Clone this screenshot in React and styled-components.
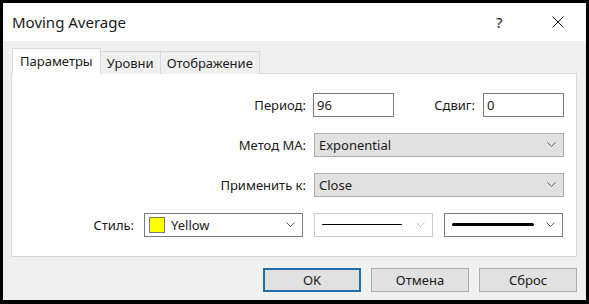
import styled, { createGlobalStyle } from "styled-components";

const Global = createGlobalStyle`
  html, body {
    margin: 0;
    padding: 0;
    background: #000;
  }
  body {
    font-family: "Segoe UI", "Noto Sans", "Open Sans", sans-serif;
    font-size: 13px;
    color: #1a1a1a;
  }
`;

const Screen = styled.div`
  width: 589px;
  height: 304px;
  box-sizing: border-box;
  padding: 3px 3px 4px 3px;
  background: #000;
`;

const Window = styled.div`
  width: 583px;
  height: 297px;
  display: flex;
  flex-direction: column;
  background: #f0f0f0;
`;

const TitleBar = styled.div`
  height: 38px;
  flex-shrink: 0;
  display: flex;
  align-items: center;
  background: #fff;
  padding-left: 9px;
`;

const Title = styled.div`
  flex: 1;
  font-size: 15px;
  color: #1a1a1a;
`;

const Help = styled.div`
  width: 22px;
  font-size: 15px;
  color: #1a1a1a;
  margin-right: 34px;
`;

const Close = styled.div`
  width: 12px;
  height: 12px;
  margin-right: 22px;
  display: flex;
`;

const Body = styled.div`
  flex: 1;
  padding: 7px 9px 0 8px;
  display: flex;
  flex-direction: column;
`;

const TabList = styled.div`
  height: 26px;
  display: flex;
  align-items: flex-end;
  padding-left: 1px;
  position: relative;
  z-index: 1;
`;

const Tab = styled.div`
  box-sizing: border-box;
  height: ${(p) => (p.$active ? "26px" : "23px")};
  padding: 0 ${(p) => (p.$active ? "7px" : "6px")};
  display: flex;
  align-items: center;
  background: ${(p) => (p.$active ? "#fff" : "#f0f0f0")};
  border: 1px solid #d9d9d9;
  border-bottom: none;
  margin-left: ${(p) => (p.$first ? "0" : "-1px")};
  padding-bottom: ${(p) => (p.$active ? "2px" : "0")};
`;

const Panel = styled.div`
  box-sizing: border-box;
  margin-top: -1px;
  width: 566px;
  height: 184px;
  background: #fff;
  border: 1px solid #d9d9d9;
  padding-top: 19px;
  display: flex;
  flex-direction: column;
  gap: 17px;
`;

const Row = styled.div`
  display: flex;
  align-items: center;
  height: 23px;
`;

const Label = styled.div`
  width: ${(p) => p.$w}px;
  text-align: right;
  margin-right: ${(p) => p.$gap}px;
  white-space: nowrap;
`;

const TextInput = styled.div`
  box-sizing: border-box;
  width: ${(p) => p.$w}px;
  height: 24px;
  border: 1px solid #7a7a7a;
  background: #fff;
  padding: 0 3px;
  display: flex;
  align-items: center;
`;

const Select = styled.div`
  box-sizing: border-box;
  width: ${(p) => p.$w}px;
  height: 24px;
  margin-right: ${(p) => p.$mr || 0}px;
  border: 1px solid ${(p) => (p.$flat ? "#adadad" : p.$disabled ? "#cccccc" : "#7a7a7a")};
  background: ${(p) => (p.$flat ? "#e1e1e1" : "#fff")};
  padding: 0 7px 0 4px;
  display: flex;
  align-items: center;
  gap: 6px;
`;

const Value = styled.div`
  flex: 1;
`;

const Swatch = styled.div`
  width: 16px;
  height: 16px;
  box-sizing: border-box;
  background: #ffff00;
  border: 1px solid #7a7a7a;
`;

const Line = styled.div`
  flex: 1;
  height: ${(p) => p.$h}px;
  border-radius: ${(p) => p.$h / 2}px;
  background: #000;
  margin: 0 ${(p) => p.$end}px 0 3px;
`;

const Footer = styled.div`
  display: flex;
  justify-content: flex-end;
  gap: 10px;
  margin-top: 11px;
`;

const Button = styled.div`
  box-sizing: border-box;
  width: 98px;
  height: 24px;
  display: flex;
  align-items: center;
  justify-content: center;
  background: #e1e1e1;
  border: ${(p) => (p.$default ? "2px solid #1f6ea8" : "1px solid #adadad")};
`;

function Chevron({ color = "#606060" }) {
  return (
    <svg width="9" height="5" viewBox="0 0 9 5">
      <path d="M0.5 0.5 L4.5 4.5 L8.5 0.5" fill="none" stroke={color} strokeWidth="1" />
    </svg>
  );
}

export default function App() {
  return (
    <Screen>
      <Global />
      <Window>
        <TitleBar>
          <Title>Moving Average</Title>
          <Help>?</Help>
          <Close>
            <svg width="12" height="12" viewBox="0 0 12 12">
              <path d="M0.5 0.5 L11.5 11.5 M11.5 0.5 L0.5 11.5" stroke="#1a1a1a" strokeWidth="1" />
            </svg>
          </Close>
        </TitleBar>
        <Body>
          <TabList>
            <Tab $active $first>Параметры</Tab>
            <Tab>Уровни</Tab>
            <Tab>Отображение</Tab>
          </TabList>
          <Panel>
            <Row>
              <Label $w={294} $gap={7}>Период:</Label>
              <TextInput $w={81}>96</TextInput>
              <Label $w={81} $gap={8}>Сдвиг:</Label>
              <TextInput $w={81}>0</TextInput>
            </Row>
            <Row>
              <Label $w={294} $gap={8}>Метод МА:</Label>
              <Select $w={250} $flat>
                <Value>Exponential</Value>
                <Chevron />
              </Select>
            </Row>
            <Row>
              <Label $w={294} $gap={8}>Применить к:</Label>
              <Select $w={250} $flat>
                <Value>Close</Value>
                <Chevron />
              </Select>
            </Row>
            <Row>
              <Label $w={122} $gap={10}>Стиль:</Label>
              <Select $w={159} $mr={11}>
                <Swatch />
                <Value>Yellow</Value>
                <Chevron />
              </Select>
              <Select $w={119} $mr={11} $disabled>
                <Line $h={1} $end={8} />
                <Chevron color="#c4c4c4" />
              </Select>
              <Select $w={119}>
                <Line $h={3} $end={6} />
                <Chevron />
              </Select>
            </Row>
          </Panel>
          <Footer>
            <Button $default>OK</Button>
            <Button>Отмена</Button>
            <Button>Сброс</Button>
          </Footer>
        </Body>
      </Window>
    </Screen>
  );
}
